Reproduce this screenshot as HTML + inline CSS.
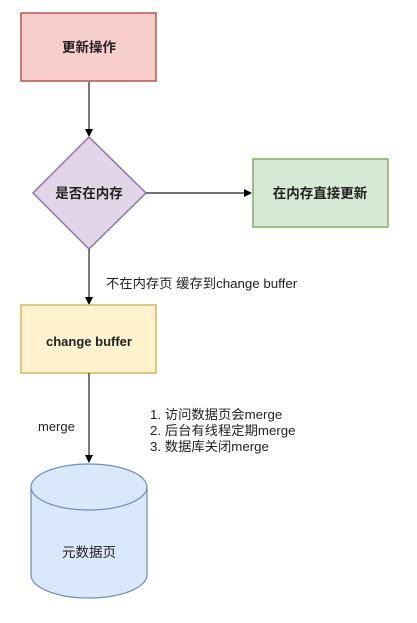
<!DOCTYPE html>
<html><head><meta charset="utf-8"><style>
body{margin:0;background:#fff;width:417px;height:618px;overflow:hidden}
svg text{font-family:"Liberation Sans","Noto Sans CJK SC",sans-serif}
</style></head><body>
<svg width="417" height="618" viewBox="0 0 417 618">
<defs><marker id="a" markerWidth="8" markerHeight="8" refX="7" refY="4" orient="auto" markerUnits="userSpaceOnUse"><path d="M0,0 L8,4 L0,8 Z" fill="#000"/></marker></defs>
<rect x="21" y="13" width="135" height="68" fill="#f8cecc" stroke="#b85450" stroke-width="1.5"/>
<text x="89" y="52" font-size="13.5" font-weight="bold" text-anchor="middle" fill="#222">更新操作</text>
<line x1="89" y1="82" x2="89" y2="136" stroke="#222" stroke-width="1.2" marker-end="url(#a)"/>
<polygon points="89,137 146,193 89,249 33,193" fill="#e1d5e7" stroke="#9673a6" stroke-width="1.5"/>
<text x="89" y="198" font-size="13.5" font-weight="bold" text-anchor="middle" fill="#222">是否在内存</text>
<line x1="146" y1="193" x2="251" y2="193" stroke="#222" stroke-width="1.2" marker-end="url(#a)"/>
<rect x="253" y="159" width="135" height="68" fill="#d5e8d4" stroke="#82b366" stroke-width="1.5"/>
<text x="320" y="198" font-size="13.5" font-weight="bold" text-anchor="middle" fill="#222">在内存直接更新</text>
<line x1="89" y1="249" x2="89" y2="304" stroke="#222" stroke-width="1.2" marker-end="url(#a)"/>
<text x="106" y="288" font-size="13.3" fill="#222">不在内存页 缓存到change buffer</text>
<rect x="21" y="305" width="135" height="68" fill="#fff2cc" stroke="#d6b656" stroke-width="1.5"/>
<text x="89" y="346" font-size="13" font-weight="bold" text-anchor="middle" fill="#222">change buffer</text>
<line x1="89" y1="373" x2="89" y2="462" stroke="#222" stroke-width="1.2" marker-end="url(#a)"/>
<text x="38" y="431" font-size="13" fill="#222">merge</text>
<text font-size="13.3" fill="#222"><tspan x="150" y="419">1. 访问数据页会merge</tspan><tspan x="150" y="435">2. 后台有线程定期merge</tspan><tspan x="150" y="451">3. 数据库关闭merge</tspan></text>
<path d="M31,487 L31,575 A58,23 0 0 0 147,575 L147,487" fill="#dae8fc" stroke="#6c8ebf" stroke-width="1.2"/>
<ellipse cx="89" cy="487" rx="58" ry="23" fill="#dae8fc" stroke="#6c8ebf" stroke-width="1.2"/>
<text x="89" y="557" font-size="13.5" text-anchor="middle" fill="#222">元数据页</text>
</svg>
</body></html>
